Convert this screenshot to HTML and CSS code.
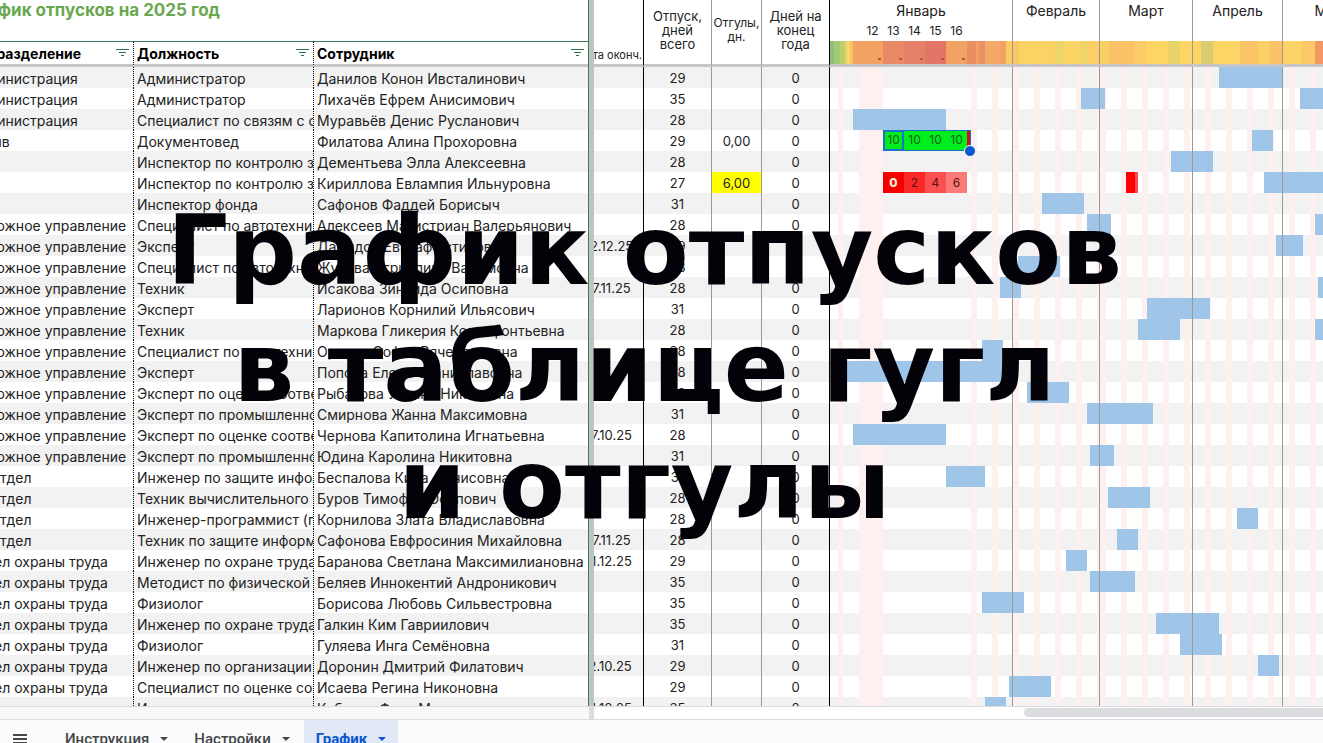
FILE: index.html
```
<!DOCTYPE html>
<html lang="ru">
<head>
    <meta charset="UTF-8">
    <meta name="viewport" content="width=device-width, initial-scale=1.0">
    <title>График отпусков</title>
    <link rel="stylesheet" href="styles.css">
</head>
<body>
    <main class="sheet">
        <section class="frozen">
            <table class="staff">
                <colgroup>
                    <col class="col-dept">
                    <col class="col-post">
                    <col class="col-name">
                </colgroup>
                <thead>
                    <tr class="title-row">
                        <th colspan="3">График отпусков на 2025 год</th>
                    </tr>
                    <tr class="head-row">
                        <th><div class="head-cell">Подразделение
                            <button class="filter" aria-label="Фильтр: подразделение"><svg width="13" height="8" viewBox="0 0 13 8"><path d="M0 .5h13M3 3.5h7M5 6.5h3"/></svg></button></div></th>
                        <th><div class="head-cell">Должность
                            <button class="filter" aria-label="Фильтр: должность"><svg width="13" height="8" viewBox="0 0 13 8"><path d="M0 .5h13M3 3.5h7M5 6.5h3"/></svg></button></div></th>
                        <th><div class="head-cell">Сотрудник
                            <button class="filter" aria-label="Фильтр: сотрудник"><svg width="13" height="8" viewBox="0 0 13 8"><path d="M0 .5h13M3 3.5h7M5 6.5h3"/></svg></button></div></th>
                    </tr>
                </thead>
                <tbody id="staffBody"></tbody>
            </table>
        </section>
        <div class="divider"></div>
        <section class="scrolled">
            <table class="plan">
                <colgroup>
                    <col class="col-date">
                    <col class="col-total">
                    <col class="col-off">
                    <col class="col-end">
                    <col>
                </colgroup>
                <thead>
                    <tr>
                        <th class="date">Дата оконч.</th>
                        <th class="total">Отпуск, дней всего</th>
                        <th class="off">Отгулы, дн.</th>
                        <th class="end">Дней на конец года</th>
                        <th class="chart-head">
                            <div class="months">
                                <div class="month">Январь
                                    <div class="days"><span>12</span><span>13</span><span>14</span><span>15</span><span>16</span></div>
                                </div>
                                <div class="month">Февраль</div>
                                <div class="month">Март</div>
                                <div class="month">Апрель</div>
                                <div class="month">Май</div>
                            </div>
                            <div class="heat"><i></i><i></i><i></i><i></i><i></i></div>
                        </th>
                    </tr>
                </thead>
                <tbody id="planBody"></tbody>
            </table>
        </section>
    </main>

    <div class="scrollbars">
        <div class="scroll-left"></div>
        <div class="scroll-divider"></div>
        <div class="scroll-right"><div class="thumb"></div></div>
    </div>

    <nav class="tabs">
        <button class="menu" aria-label="Все листы"><svg width="14" height="12" viewBox="0 0 14 12"><path d="M0 1h14M0 5h14M0 9h14"/></svg></button>
        <button class="tab">Инструкция<span class="arrow"></span></button>
        <button class="tab">Настройки<span class="arrow"></span></button>
        <button class="tab active">График<span class="arrow"></span></button>
    </nav>

    <h1 class="caption">График отпусков<br>в таблице гугл<br>и отгулы</h1>

    <script src="script.js"></script>
</body>
</html>
```

FILE: styles.css
```
* {
    box-sizing: border-box;
}

body {
    margin: 0;
    height: 100vh;
    overflow: hidden;
    position: relative;
    display: flex;
    flex-direction: column;
    font-family: Inter, "Liberation Sans", sans-serif;
    font-size: 13px;
    color: #222;
    background: #fff;
}

button {
    font: inherit;
    border: none;
    background: none;
    padding: 0;
    cursor: pointer;
}

.sheet {
    flex: 1;
    min-height: 0;
    display: flex;
    overflow: hidden;
    border-bottom: 1px solid #dadce0;
}

/* frozen columns */
.frozen {
    width: 589px;
    flex: none;
    overflow: hidden;
    border-right: 1px solid #3f7a5a;
}

.divider {
    width: 5px;
    flex: none;
    background: #bcc5be;
}

.scrolled {
    flex: 1;
    min-width: 0;
    overflow: hidden;
}

table {
    table-layout: fixed;
    border-collapse: separate;
    border-spacing: 0;
}

th, td {
    padding: 0;
    overflow: hidden;
    white-space: nowrap;
    font-weight: 400;
}

tbody td {
    height: 21px;
    padding-top: 2px;
    line-height: 19px;
}

tbody tr:nth-child(odd) {
    background: #f2f2f2;
}

.staff {
    width: 623px;
    margin-left: -35px;
}

.col-dept {
    width: 168px;
}

.col-post {
    width: 180px;
}

.title-row th {
    height: 41px;
    padding: 0 3px;
    text-align: left;
    vertical-align: top;
    font-size: 17px;
    line-height: 20px;
    font-weight: 700;
    color: #6aa84f;
}

.head-row th {
    height: 26px;
    border-top: 1px solid #3f7a5a;
    border-bottom: 3px solid #c6c6c6;
    font-size: 14px;
    font-weight: 700;
    color: #000;
}

.head-cell {
    display: flex;
    justify-content: space-between;
    align-items: center;
    padding: 0 4px 0 3px;
}

.filter {
    display: flex;
}

.filter svg {
    fill: none;
    stroke: #2f7050;
}

.staff td {
    padding-left: 3px;
    font-size: 14px;
}

.staff td + td, .head-row th + th {
    border-left: 1px dotted #000;
}

/* numbers and chart */
.plan {
    width: calc(100% + 22px);
    margin-left: -22px;
    text-align: center;
}

.col-date {
    width: 72px;
}

.col-total {
    width: 68px;
}

.col-off {
    width: 50px;
}

.col-end {
    width: 68px;
}

.plan thead th {
    height: 67px;
    padding: 0 5px 4px;
    border-bottom: 3px solid #c6c6c6;
    line-height: 14px;
    white-space: normal;
}

.plan .date {
    border-right: 1px solid #000;
}

.plan .total, .plan .off {
    border-right: 1px solid #999;
}

.plan .end {
    border-right: 1px solid #000;
}

.plan thead .date {
    padding: 0 1px 2px 0;
    vertical-align: bottom;
    text-align: right;
    font-size: 11px;
    white-space: nowrap;
}

.plan thead .off {
    padding: 0 1px 4px;
    font-size: 12px;
}

.plan thead .chart-head {
    padding: 0;
    vertical-align: top;
}

.plan td.debt {
    background: #ff0;
}

.months {
    display: grid;
    grid-template-columns: 183px 87px 93px 90px 93px;
    height: 41px;
    overflow: hidden;
}

.month {
    padding-top: 4px;
    border-right: 1px solid #999;
    font-size: 14px;
}

.days {
    display: flex;
    padding: 6px 0 0 32px;
    font-size: 12px;
    line-height: 14px;
}

.days span {
    width: 21px;
}

.heat {
    display: flex;
    align-items: flex-end;
    height: 23px;
    padding: 0 0 4px 48px;
    background:
        linear-gradient(90deg, transparent 182px, #999 182px 183px, transparent 183px 269px, #999 269px 270px, transparent 270px 362px, #999 362px 363px, transparent 363px 452px, #999 452px 453px, transparent 453px),
        linear-gradient(90deg, #8dbf7c 0 4px, #a5ca76 4px 10px, #bccf6f 10px 15px, #e6d468 15px 17px, #fcd765 17px 20px, #fbc065 20px 23px, #f2a263 23px 53px, #e88a68 53px 74px, #e58068 74px 95px, #e27567 95px 116px, #f2a263 116px 137px, #ea8e64 137px 146px, #f0a064 146px 149px, #e98f65 149px 155px, #f5a966 155px 170px, #f2a263 170px 176px, #fccd66 176px 182px, #fcc566 182px 189px, #f9d465 189px 198px, #fcd265 198px 225px, #ecd569 225px 235px, #fcd465 235px 249px, #eed568 249px 258px, #fcce66 258px 279px, #fbc266 279px 305px, #fccd66 305px 317px, #fcd565 317px 338px, #e8d26a 338px 350px, #fcd565 350px 371px, #d8ce70 371px 383px, #fcd565 383px 410px, #fbc567 410px 428px, #fcd066 428px 440px, #fbc267 440px 452px, #fcd465 452px 471px, #fcc966 471px 485px, #f19762 485px);
}

.heat i {
    width: 3px;
    height: 2px;
    margin-right: 18px;
    flex: none;
    background: #b9553f;
}

.plan .chart {
    padding: 0;
    background-repeat: no-repeat;
    background-image:
        linear-gradient(90deg, transparent 8px, #fff0f0 8px 13px, transparent 13px 29px, #fff0f0 29px 53px, transparent 53px),
        repeating-linear-gradient(90deg, #fff0f0 0 6px, transparent 6px 21px),
        repeating-linear-gradient(90deg, #fff0f0 0 6px, transparent 6px 21px);
    background-position: 0 0, 141px 0, 270px 0;
    background-size: auto, 128px 100%, 100% 100%;
}

.track {
    display: flex;
    position: relative;
    height: 21px;
}

/* month lines lie over the bars */
.track::after {
    content: '';
    position: absolute;
    inset: 0;
    background: linear-gradient(90deg, transparent 182px, #999 182px 183px, transparent 183px 269px, #999 269px 270px, transparent 270px 362px, #999 362px 363px, transparent 363px 452px, #999 452px 453px, transparent 453px);
}

.bar {
    flex: none;
    background: #9fc5e8;
}

.bar.spent {
    background: linear-gradient(90deg, #f00 9px, #ff4c50 9px);
}

.hours {
    flex: none;
    display: flex;
    font-size: 12px;
    line-height: 21px;
}

.hours span {
    width: 21px;
    color: #5a1010;
}

.hours span:nth-child(1) {
    background: #f50000;
    color: #ffe9d0;
    font-weight: 800;
}

.hours span:nth-child(2) {
    background: #fb2828;
}

.hours span:nth-child(3) {
    background: #fb5050;
}

.hours span:nth-child(4) {
    background: #fb7a7a;
}

.hours.selected {
    position: relative;
    line-height: 20px;
    background: linear-gradient(90deg, #00ee1c 84px, #d01020 84px);
    box-shadow: inset 0 0 0 1px #1a73c8;
}

.hours.selected span {
    background: none;
    color: #14611c;
    font-weight: 400;
}

.hours.selected span:first-child {
    border: 2px solid #1a73c8;
    line-height: 16px;
}

.hours.selected::after {
    content: '';
    position: absolute;
    right: -5px;
    bottom: -6px;
    width: 10px;
    height: 10px;
    border: 1px solid #fff;
    border-radius: 50%;
    background: #0b57d0;
}

td.overflow {
    overflow: visible;
}

.overflow .track {
    z-index: 1;
}

/* scrollbars */
.scrollbars {
    flex: none;
    display: flex;
    height: 13px;
    border-bottom: 1px solid #dadce0;
}

.scroll-left {
    width: 589px;
    background: #f8f8f8;
}

.scroll-divider {
    width: 5px;
    background: #dadddb;
}

.scroll-right {
    flex: 1;
    overflow: hidden;
    padding: 1px 0 0 430px;
}

.thumb {
    height: 9px;
    border-radius: 5px 0 0 5px;
    background: #dadce0;
}

/* sheet tabs */
.tabs {
    flex: none;
    display: flex;
    align-items: flex-start;
    height: 23px;
    overflow: hidden;
    background: #f9fbfd;
    font-family: Roboto, "Liberation Sans", sans-serif;
}

.menu {
    display: flex;
    padding: 14px 26px 0 13px;
}

.menu svg {
    stroke: #444746;
    stroke-width: 2;
}

.tab {
    display: flex;
    align-items: center;
    gap: 11px;
    height: 38px;
    padding: 0 12px;
    margin-right: 2px;
    font-size: 15px;
    font-weight: 500;
    color: #444746;
}

.tab.active {
    background: #e1e9f7;
    color: #0b57d0;
    font-weight: 700;
}

.arrow {
    border: 4px solid transparent;
    border-top-color: currentColor;
    border-bottom: none;
}

.caption {
    position: absolute;
    top: 193px;
    left: 0;
    right: 34px;
    margin: 0;
    text-align: center;
    font-family: "DejaVu Sans", sans-serif;
    font-size: 96px;
    line-height: 117px;
    font-weight: 700;
    color: #020208;
    pointer-events: none;
    z-index: 2;
}
```

FILE: script.js
```
const roads = 'Дорожное управление';
const safety = 'Отдел охраны труда';
const it = 'ИТ отдел';

// dept, post, name, end date, total, off hours, bars [start, length]
const rows = [
    ['Администрация', 'Администратор', 'Данилов Конон Ивсталинович', '', 29, '', [[389, 63]]],
    ['Администрация', 'Администратор', 'Лихачёв Ефрем Анисимович', '', 35, '', [[251, 24], [470, 42]]],
    ['Администрация', 'Специалист по связям с общественностью', 'Муравьёв Денис Русланович', '', 28, '', [[23, 93]]],
    ['Архив', 'Документовед', 'Филатова Алина Прохоровна', '', 29, '0,00', [[53, 88, 'selected', [10, 10, 10, 10]], [422, 21]]],
    ['', 'Инспектор по контролю за исполнением', 'Дементьева Элла Алексеевна', '', 28, '', [[341, 42]]],
    ['', 'Инспектор по контролю за исполнением', 'Кириллова Евлампия Ильнуровна', '', 27, '6,00', [[53, 84, 'red', [0, 2, 4, 6]], [296, 12, 'spent'], [434, 84]]],
    ['', 'Инспектор фонда', 'Сафонов Фаддей Борисыч', '', 31, '', [[212, 42]]],
    [roads, 'Специалист по автотехнической экспертизе', 'Алексеев Магистриан Валерьянович', '', 28, '', [[257, 24], [485, 42]]],
    [roads, 'Эксперт', 'Давыдов Евграф Устинович', '02.12.25', 29, '', [[446, 27]]],
    [roads, 'Специалист по автотехнической экспертизе', 'Жукова Агриппина Вадимовна', '', 28, '', [[188, 42]]],
    [roads, 'Техник', 'Исакова Зинаида Осиповна', '07.11.25', 28, '', [[170, 21], [488, 42]]],
    [roads, 'Эксперт', 'Ларионов Корнилий Ильясович', '', 31, '', [[317, 63]]],
    [roads, 'Техник', 'Маркова Гликерия Ксенофонтьевна', '', 28, '', [[308, 42], [485, 42]]],
    [roads, 'Специалист по автотехнической экспертизе', 'Орлова Софья Вячеславовна', '', 28, '', [[152, 21]]],
    [roads, 'Эксперт', 'Попова Елена Станиславовна', '', 28, '', [[14, 160]]],
    [roads, 'Эксперт по оценке соответствия', 'Рыбакова Ульяна Никитична', '', 28, '', [[197, 42]]],
    [roads, 'Эксперт по промышленной безопасности', 'Смирнова Жанна Максимовна', '', 31, '', [[257, 66]]],
    [roads, 'Эксперт по оценке соответствия', 'Чернова Капитолина Игнатьевна', '07.10.25', 28, '', [[23, 93]]],
    [roads, 'Эксперт по промышленной безопасности', 'Юдина Каролина Никитовна', '', 31, '', [[260, 24]]],
    [it, 'Инженер по защите информации', 'Беспалова Кира Денисовна', '', 31, '', [[116, 39]]],
    [it, 'Техник вычислительного центра', 'Буров Тимофей Осипович', '', 28, '', [[278, 42]]],
    [it, 'Инженер-программист (программист)', 'Корнилова Злата Владиславовна', '', 28, '', [[407, 21]]],
    [it, 'Техник по защите информации', 'Сафонова Евфросиния Михайловна', '27.11.25', 28, '', [[287, 21]]],
    [safety, 'Инженер по охране труда', 'Баранова Светлана Максимилиановна', '21.12.25', 29, '', [[236, 21]]],
    [safety, 'Методист по физической культуре', 'Беляев Иннокентий Андроникович', '', 35, '', [[260, 45]]],
    [safety, 'Физиолог', 'Борисова Любовь Сильвестровна', '', 35, '', [[152, 42]]],
    [safety, 'Инженер по охране труда', 'Галкин Ким Гавриилович', '', 35, '', [[326, 63]]],
    [safety, 'Физиолог', 'Гуляева Инга Семёновна', '', 31, '', [[350, 42]]],
    [safety, 'Инженер по организации труда', 'Доронин Дмитрий Филатович', '12.10.25', 29, '', [[428, 21]]],
    [safety, 'Специалист по оценке соответствия', 'Исаева Регина Никоновна', '', 29, '', [[179, 42]]],
    [safety, 'Инженер по охране труда', 'Кабанов Фока Матвеевич', '14.10.25', 35, '', [[155, 21]]]
];

function drawBars(bars) {
    let end = 0;
    return bars.map(([start, length, type, hours]) => {
        const style = `margin-left:${start - end}px;width:${length}px`;
        end = start + length;
        if (hours) {
            return `<div class="hours ${type}" style="${style}">${hours.map(h => `<span>${h}</span>`).join('')}</div>`;
        }
        return `<div class="bar ${type || ''}" style="${style}"></div>`;
    }).join('');
}

document.getElementById('staffBody').innerHTML = rows.map(([dept, post, name]) =>
    `<tr><td>${dept}</td><td>${post}</td><td>${name}</td></tr>`).join('');

document.getElementById('planBody').innerHTML = rows.map(([, , , date, total, off, bars]) => {
    const selected = bars.some(bar => bar[2] === 'selected');
    return `<tr>
        <td class="date">${date}</td>
        <td class="total">${total}</td>
        <td class="off ${off === '6,00' ? 'debt' : ''}">${off}</td>
        <td class="end">0</td>
        <td class="chart ${selected ? 'overflow' : ''}"><div class="track">${drawBars(bars)}</div></td>
    </tr>`;
}).join('');
```
